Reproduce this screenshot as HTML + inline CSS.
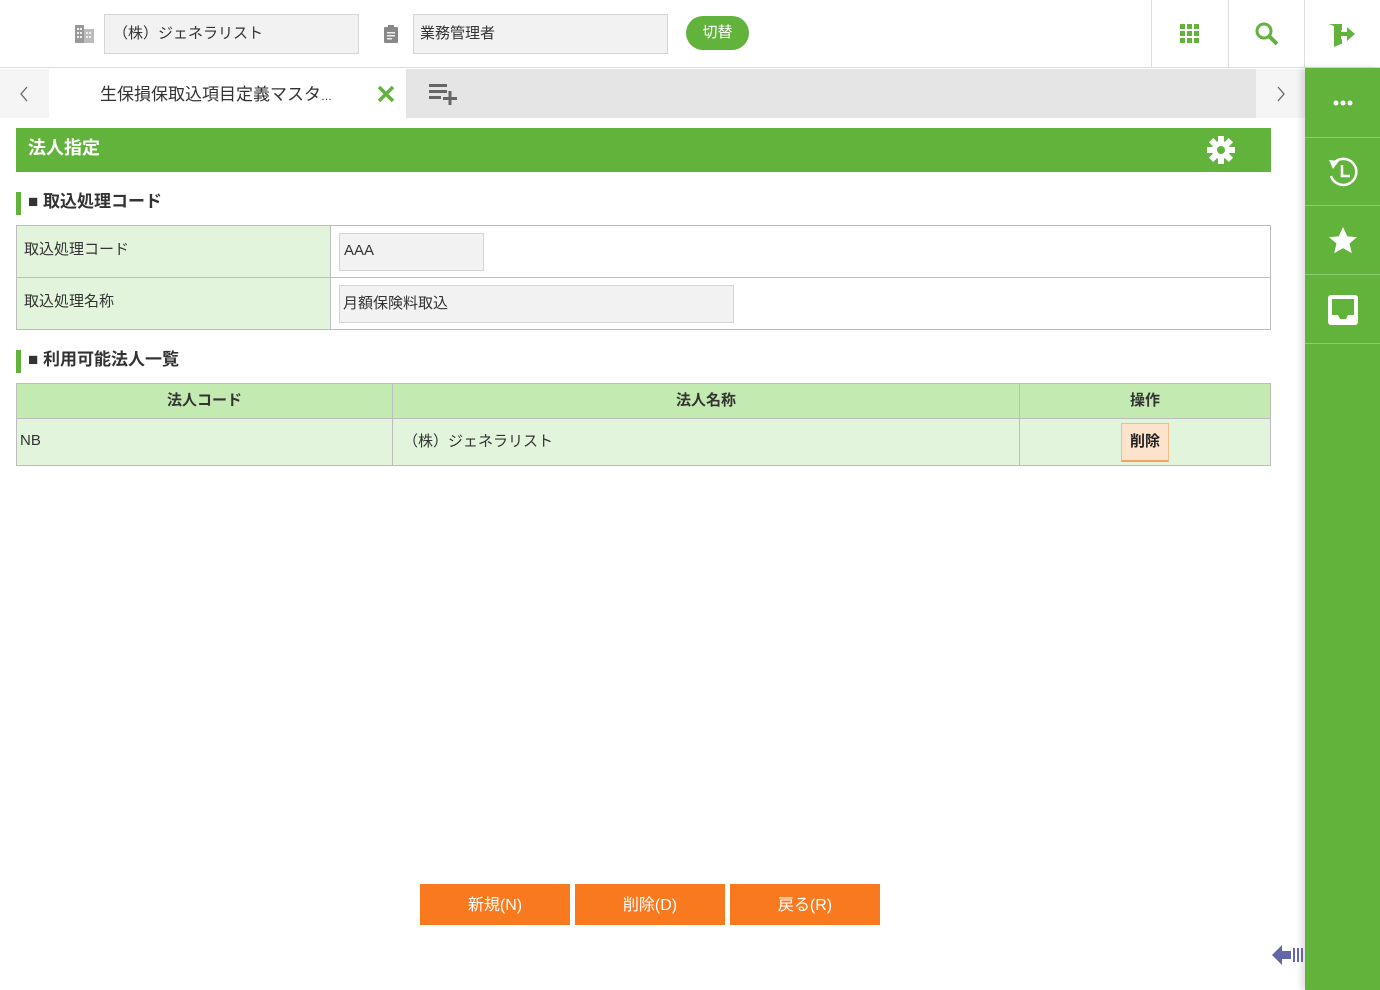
<!DOCTYPE html>
<html><head><meta charset="utf-8"><style>
*{box-sizing:border-box;margin:0;padding:0}
body{width:1380px;height:990px;position:relative;background:#fff;font-family:"Liberation Sans","Noto Sans CJK JP",sans-serif;color:#333;overflow:hidden}
.abs{position:absolute}
.inp{position:absolute;background:#f2f2f2;border:1px solid #d5d5d5;font-size:15px;color:#333;padding-left:8px;display:flex;align-items:center;padding-bottom:3px}
.hdr{left:0;top:0;width:1380px;height:68px;border-bottom:1px solid #ddd;background:#fff}
.tabbar{left:0;top:69px;width:1305px;height:49px;background:#f5f5f5}
.side{left:1305px;top:68px;width:75px;height:922px;background:#62b33c;box-shadow:-4px 0 6px rgba(0,0,0,.12)}
.sidecell{position:absolute;left:0;width:75px;height:68px;border-bottom:1px solid #8ccb6e;display:flex;align-items:center;justify-content:center}
.sec{position:absolute;left:16px;height:23px;border-left:5px solid #62b33c;font-weight:bold;font-size:17px;padding-left:7px;line-height:20px;color:#333}
table{border-collapse:collapse;position:absolute}
td,th{border:1px solid #bdbdbd;font-size:15px}
.btn{position:absolute;top:884px;width:150px;height:41px;background:#f97a1e;color:#fff;font-size:16px;display:flex;align-items:center;justify-content:center;padding-bottom:3px}
</style></head><body>
<div class="abs hdr"></div>
<svg class="abs" style="left:75px;top:24px" width="20" height="20" viewBox="0 0 20 20"><rect x="0" y="1" width="9" height="18" fill="#999"/><rect x="9" y="5" width="10" height="14" fill="#bbb"/><g fill="#eee"><rect x="2" y="4" width="2" height="2"/><rect x="5" y="4" width="2" height="2"/><rect x="2" y="8" width="2" height="2"/><rect x="5" y="8" width="2" height="2"/><rect x="2" y="12" width="2" height="2"/><rect x="5" y="12" width="2" height="2"/><rect x="11" y="8" width="2" height="2"/><rect x="14" y="8" width="2" height="2"/><rect x="11" y="12" width="2" height="2"/><rect x="14" y="12" width="2" height="2"/></g></svg>
<div class="inp" style="left:104px;top:14px;width:255px;height:40px">（株）ジェネラリスト</div>
<svg class="abs" style="left:383px;top:24px" width="16" height="20" viewBox="0 0 16 20"><rect x="1" y="3" width="14" height="16" rx="1" fill="#888"/><rect x="5" y="1" width="6" height="4" fill="#888"/><g fill="#eee"><rect x="4" y="8" width="8" height="1.5"/><rect x="4" y="11" width="8" height="1.5"/><rect x="4" y="14" width="5" height="1.5"/></g></svg>
<div class="inp" style="left:413px;top:14px;width:255px;height:40px;padding-left:6px">業務管理者</div>
<div class="abs" style="left:686px;top:16px;width:63px;height:34px;border-radius:17px;background:#62b33c;color:#fff;font-size:15px;display:flex;align-items:center;justify-content:center;padding-bottom:3px">切替</div>
<div class="abs" style="left:1151px;top:0;width:1px;height:68px;background:#ddd"></div>
<div class="abs" style="left:1228px;top:0;width:1px;height:68px;background:#ddd"></div>
<div class="abs" style="left:1304px;top:0;width:1px;height:68px;background:#ddd"></div>
<svg class="abs" style="left:1180px;top:24px" width="20" height="20" viewBox="0 0 20 20" fill="#62b33c"><rect x="0" y="0" width="5" height="5"/><rect x="7" y="0" width="5" height="5"/><rect x="14" y="0" width="5" height="5"/><rect x="0" y="7" width="5" height="5"/><rect x="7" y="7" width="5" height="5"/><rect x="14" y="7" width="5" height="5"/><rect x="0" y="14" width="5" height="5"/><rect x="7" y="14" width="5" height="5"/><rect x="14" y="14" width="5" height="5"/></svg>
<svg class="abs" style="left:1255px;top:22px" width="24" height="24" viewBox="0 0 24 24"><circle cx="9" cy="9" r="7" stroke="#62b33c" stroke-width="3" fill="none"/><path d="M14 14l8 8" stroke="#62b33c" stroke-width="4"/></svg>
<svg class="abs" style="left:1329px;top:22px" width="28" height="26" viewBox="0 0 28 26" fill="#62b33c"><path d="M0 2h12v20l-7 3V4z"/><path d="M12 10h6V5l8 7-8 7v-5h-6z"/><rect x="10" y="2" width="3" height="6"/><rect x="10" y="17" width="3" height="5"/></svg>
<div class="abs tabbar"></div>
<svg class="abs" style="left:19px;top:86px" width="10" height="16"><path d="M8 1L2 8l6 7" stroke="#666" stroke-width="1.3" fill="none"/></svg>
<svg class="abs" style="left:1276px;top:86px" width="10" height="16"><path d="M2 1l6 7-6 7" stroke="#666" stroke-width="1.3" fill="none"/></svg>
<div class="abs" style="left:49px;top:69px;width:357px;height:49px;background:#fff"></div>
<div class="abs" style="left:406px;top:69px;width:850px;height:49px;background:#e5e5e5"></div>
<div class="abs" style="left:100px;top:80px;font-size:17px;color:#333">生保損保取込項目定義マスタ<span style="font-size:11px">…</span></div>
<svg class="abs" style="left:377px;top:85px" width="18" height="18" viewBox="0 0 18 18"><path d="M2 2l14 14M16 2L2 16" stroke="#62b33c" stroke-width="3.5"/></svg>
<svg class="abs" style="left:429px;top:83px" width="30" height="22" viewBox="0 0 30 22" fill="#666"><rect x="0" y="1" width="18" height="3"/><rect x="0" y="7" width="18" height="3"/><rect x="0" y="13" width="12" height="3"/><rect x="14" y="14" width="14" height="3"/><rect x="19.5" y="8" width="3" height="14"/></svg>
<div class="abs side"></div>
<div class="abs" style="left:1305px;top:68px">
<div class="sidecell" style="top:0;height:70px"><svg width="20" height="6"><circle cx="3" cy="3" r="2.5" fill="#fff"/><circle cx="10" cy="3" r="2.5" fill="#fff"/><circle cx="17" cy="3" r="2.5" fill="#fff"/></svg></div>
<div class="sidecell" style="top:70px"><svg width="36" height="36" viewBox="0 0 36 36"><path d="M8 10A13 13 0 1 1 6 22" stroke="#fff" stroke-width="2.5" fill="none"/><path d="M4 6l10 1-6 8z" fill="#fff"/><path d="M17 11v11h8" stroke="#fff" stroke-width="2.5" fill="none"/></svg></div>
<div class="sidecell" style="top:139px"><svg width="32" height="32" viewBox="0 0 24 24"><path d="M12 1.5l3.2 7 7.3.6-5.6 4.8 1.7 7.3L12 17.3l-6.6 3.9 1.7-7.3-5.6-4.8 7.3-.6z" fill="#fff"/></svg></div>
<div class="sidecell" style="top:208px"><svg width="32" height="32" viewBox="0 0 32 32"><rect x="1" y="1" width="30" height="30" rx="3" fill="#fff"/><path d="M5 5h22v16h-6l-2 4h-6l-2-4H5z" fill="#62b33c"/></svg></div>
</div>
<div class="abs" style="left:16px;top:128px;width:1255px;height:44px;background:#62b33c;color:#fff;font-weight:bold;font-size:18px;padding-left:12px;line-height:40px">法人指定</div>
<svg class="abs" style="left:1207px;top:136px" width="28" height="28" viewBox="0 0 28 28"><g fill="#fff"><circle cx="14" cy="14" r="9"/><rect x="11" y="0" width="6" height="6"/><rect x="11" y="22" width="6" height="6"/><rect x="0" y="11" width="6" height="6"/><rect x="22" y="11" width="6" height="6"/><g transform="rotate(45 14 14)"><rect x="11" y="0" width="6" height="6"/><rect x="11" y="22" width="6" height="6"/><rect x="0" y="11" width="6" height="6"/><rect x="22" y="11" width="6" height="6"/></g></g><circle cx="14" cy="14" r="4" fill="#62b33c"/></svg>
<div class="sec" style="top:192px">■ 取込処理コード</div>
<table style="left:16px;top:225px;width:1255px">
<tr style="height:52px"><td style="width:314px;background:#e2f4db;padding-left:7px;vertical-align:top;padding-top:12px">取込処理コード</td><td style="background:#fff"><div class="inp" style="position:relative;width:145px;height:38px;padding-left:4px;margin-left:8px">AAA</div></td></tr>
<tr style="height:52px"><td style="background:#e2f4db;padding-left:7px;vertical-align:top;padding-top:12px">取込処理名称</td><td style="background:#fff"><div class="inp" style="position:relative;width:395px;height:38px;padding-left:3px;margin-left:8px">月額保険料取込</div></td></tr>
</table>
<div class="sec" style="top:350px">■ 利用可能法人一覧</div>
<table style="left:16px;top:383px;width:1255px">
<tr style="height:35px;background:#c3eab0"><th style="width:376px;padding-bottom:3px">法人コード</th><th style="width:627px;padding-bottom:3px">法人名称</th><th style="padding-bottom:3px">操作</th></tr>
<tr style="height:47px;background:#e2f4db"><td style="padding-left:3px;padding-bottom:3px">NB</td><td style="padding-left:10px;padding-bottom:3px">（株）ジェネラリスト</td><td style="text-align:center"><span style="display:inline-block;width:48px;height:39px;line-height:35px;background:#fde3cc;border:1px solid #f5b98a;border-bottom:2px solid #f5a060;font-weight:bold;color:#222">削除</span></td></tr>
</table>
<div class="btn" style="left:420px">新規(N)</div>
<div class="btn" style="left:575px">削除(D)</div>
<div class="btn" style="left:730px">戻る(R)</div>
<svg class="abs" style="left:1272px;top:943px" width="32" height="24" viewBox="0 0 32 24" fill="#6366a8"><path d="M0 12L10 2v6h9v8h-9v6z"/><rect x="21" y="5" width="2" height="14"/><rect x="25" y="5" width="2" height="14"/><rect x="29" y="5" width="2" height="14"/></svg>
</body></html>
